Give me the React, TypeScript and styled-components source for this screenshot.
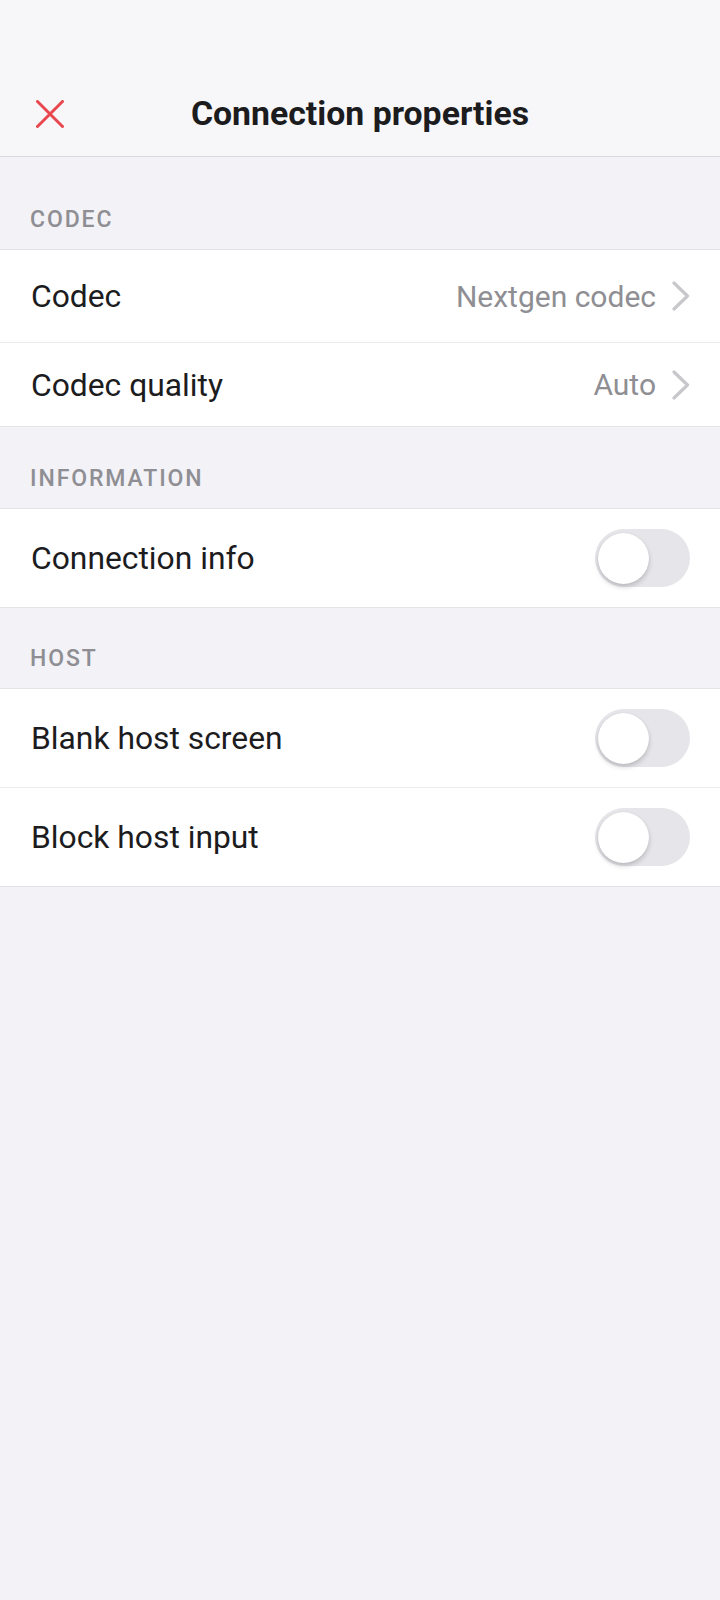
import React from "react";
import styled, { createGlobalStyle } from "styled-components";

const GlobalStyle = createGlobalStyle`
  html, body {
    margin: 0;
    padding: 0;
    background: #f2f2f7;
  }
  body {
    font-family: Roboto, "Noto Sans", "Liberation Sans", sans-serif;
    -webkit-font-smoothing: antialiased;
  }
  * { box-sizing: border-box; }
`;

const Page = styled.div`
  width: 720px;
  min-height: 1600px;
  background: #f2f2f7;
  display: flex;
  flex-direction: column;
`;

const Header = styled.header`
  height: 157px;
  padding-top: 72px;
  background: #f7f7f9;
  border-bottom: 1px solid #d9d9de;
  display: grid;
  grid-template-columns: 100px 1fr 100px;
  align-items: center;
`;

const CloseButton = styled.button`
  width: 100px;
  height: 84px;
  border: none;
  background: transparent;
  padding: 0 0 0 36px;
  display: flex;
  align-items: center;
  justify-content: flex-start;
  cursor: pointer;
`;

const Title = styled.h1`
  margin: 0;
  text-align: center;
  font-family: Roboto, "Noto Sans", sans-serif;
  font-weight: 700;
  font-size: 33.8px;
  line-height: 40px;
  color: #1c1c1e;
`;

const SectionTitle = styled.div<{ $height: number }>`
  height: ${(p) => p.$height}px;
  display: flex;
  align-items: flex-end;
  padding: 0 30px 16px;
  font-family: Roboto, "Noto Sans", sans-serif;
  font-weight: 500;
  font-size: 23px;
  line-height: 26px;
  letter-spacing: 1.9px;
  color: #8e8e93;
  text-transform: uppercase;
`;

const Group = styled.div`
  background: #ffffff;
  border-top: 1px solid #e3e3e8;
  border-bottom: 1px solid #e3e3e8;
  display: flex;
  flex-direction: column;
`;

const Row = styled.div<{ $height: number }>`
  height: ${(p) => p.$height}px;
  display: flex;
  align-items: center;
  justify-content: space-between;
  padding: 0 30px 0 31px;
  & + & {
    border-top: 1px solid #ebebef;
  }
`;

const Label = styled.span`
  font-family: Roboto, "Noto Sans", sans-serif;
  font-size: 31.8px;
  font-weight: 400;
  color: #1c1c1e;
`;

const Trailing = styled.div`
  display: flex;
  align-items: center;
  gap: 16px;
`;

const Value = styled.span`
  font-family: Roboto, "Noto Sans", sans-serif;
  font-size: 30px;
  font-weight: 400;
  color: #8e8e93;
`;

const Track = styled.div<{ $on?: boolean }>`
  position: relative;
  width: 95px;
  height: 58px;
  border-radius: 29px;
  background: ${(p) => (p.$on ? "#34c759" : "#e5e5ea")};
`;

const Knob = styled.div<{ $on?: boolean }>`
  position: absolute;
  top: 4px;
  left: ${(p) => (p.$on ? "40px" : "3px")};
  width: 51px;
  height: 51px;
  border-radius: 50%;
  background: #ffffff;
  box-shadow: 0 3px 5px rgba(0, 0, 0, 0.18), 0 0 1px rgba(0, 0, 0, 0.12);
`;

const CloseIcon = () => (
  <svg width="28" height="28" viewBox="0 0 28 28" fill="none">
    <path d="M1.5 1.5 L26.5 26.5 M26.5 1.5 L1.5 26.5" stroke="#e8474f" strokeWidth="3" strokeLinecap="round" />
  </svg>
);

const Chevron = () => (
  <svg width="18" height="30" viewBox="0 0 18 30" fill="none">
    <path d="M2 2 L15.5 15 L2 28" stroke="#c7c7cc" strokeWidth="3.2" strokeLinecap="round" strokeLinejoin="round" />
  </svg>
);

const Toggle = ({ on }: { on?: boolean }) => (
  <Track $on={on}>
    <Knob $on={on} />
  </Track>
);

export default function App() {
  return (
    <>
      <GlobalStyle />
      <Page>
        <Header>
          <CloseButton aria-label="Close">
            <CloseIcon />
          </CloseButton>
          <Title>Connection properties</Title>
          <div />
        </Header>

        <SectionTitle $height={92}>Codec</SectionTitle>
        <Group>
          <Row $height={92}>
            <Label>Codec</Label>
            <Trailing>
              <Value>Nextgen codec</Value>
              <Chevron />
            </Trailing>
          </Row>
          <Row $height={84}>
            <Label>Codec quality</Label>
            <Trailing>
              <Value>Auto</Value>
              <Chevron />
            </Trailing>
          </Row>
        </Group>

        <SectionTitle $height={81}>Information</SectionTitle>
        <Group>
          <Row $height={98}>
            <Label>Connection info</Label>
            <Toggle />
          </Row>
        </Group>

        <SectionTitle $height={80}>Host</SectionTitle>
        <Group>
          <Row $height={98}>
            <Label>Blank host screen</Label>
            <Toggle />
          </Row>
          <Row $height={99}>
            <Label>Block host input</Label>
            <Toggle />
          </Row>
        </Group>
      </Page>
    </>
  );
}
